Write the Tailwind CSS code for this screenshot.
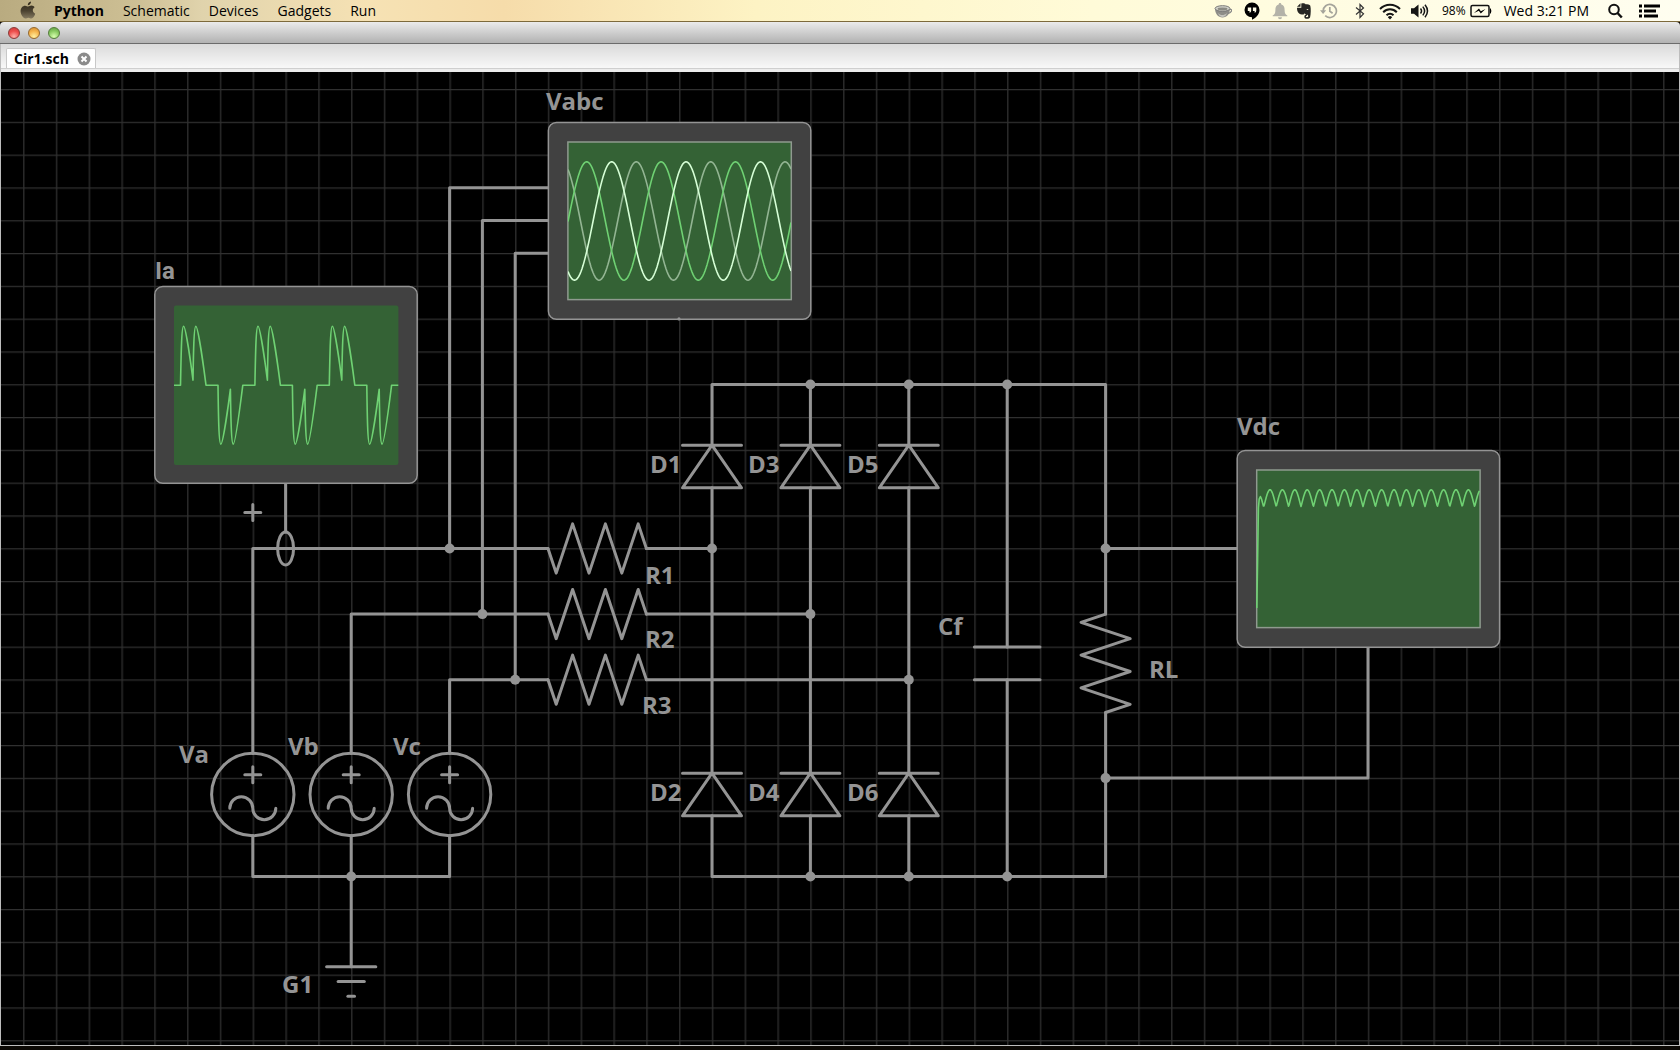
<!DOCTYPE html>
<html lang="en">
<head>
<meta charset="utf-8">
<title>Cir1.sch</title>
<script src="https://cdn.jsdelivr.net/npm/@tailwindcss/browser@4"></script>
</head>
<body class="h-screen flex flex-col overflow-hidden bg-[#0c0905] font-['Open_Sans',sans-serif] text-black">

<header class="relative z-10 flex h-[22px] shrink-0 items-center border-b border-[#7d6a3c] bg-[linear-gradient(90deg,#b9ab80_0%,#cdbf94_8%,#e0d3ac_12%,#f6e2b4_22%,#f6dcaa_30%,#fdf3c4_45%,#fffbd8_65%,#fffef0_100%)] text-sm">
  <nav class="flex items-center pl-5" aria-label="Application menu">
    <button class="flex w-[34px]" aria-label="Apple menu">
      <svg width="16" height="19" viewBox="0 0 16 19"><defs><linearGradient id="ap" x1="0" y1="0" x2="0" y2="1"><stop offset="0" stop-color="#2d2618"/><stop offset=".55" stop-color="#4b4230"/><stop offset="1" stop-color="#857a60"/></linearGradient></defs><path fill="url(#ap)" d="M11 .5c.2 1.600-1.300 3.700-3.200 3.800C7.600 2.600 9.200.8 11 .5zM8.200 5.500c.8 0 1.700-.9 3.200-.9 1.400 0 2.600.8 3.200 1.700-2.600 1.500-2.300 5.200.6 6.400-.7 2.100-2.200 4.800-3.800 4.800-1.200 0-1.600-.8-3-.8s-1.900.8-3 .8C3.300 17.500.6 13.600.6 10.300c0-3.500 2.200-5.600 4.500-5.600 1.400 0 2.300.8 3.100.8z"/></svg>
    </button>
    <button class="mr-[19px] font-bold">Python</button>
    <button class="mr-[19px]">Schematic</button>
    <button class="mr-[19px]">Devices</button>
    <button class="mr-[19px]">Gadgets</button>
    <button>Run</button>
  </nav>
  <div class="ml-auto flex items-center pr-5">
    <svg class="mr-3" width="18" height="18" viewBox="0 0 18 18"><path d="M1 6.500c0 5 3 9 7.500 9S16 11.500 16 6.500z" fill="#8d8d88"/><path d="M4 11c2 2.500 6 3 9 0-1 3-3 4-4.500 4S5 14 4 11z" fill="#c4c4bd"/><ellipse cx="8.500" cy="6.500" rx="7.500" ry="2.800" fill="#d2d2ca" stroke="#777"/><ellipse cx="8.500" cy="7" rx="5" ry="1.400" fill="#8a8a84"/><path d="M15.500 7.500c3-1 3 3-1.500 4" fill="none" stroke="#888" stroke-width="1.300"/></svg>
    <svg class="mr-3" width="16" height="18" viewBox="0 0 16 18"><path d="M8 .5a7.500 7.500 0 0 1 7.500 7.500c0 4.500-4 8.500-7.500 9.700v-2.400A7.400 7.400 0 0 1 .5 8 7.500 7.500 0 0 1 8 .5z"/><path fill="#fffce8" d="M3.800 5.500h3.400v3c0 1.200-.6 2-1.700 2.300V8.900H3.800zM8.900 5.500h3.400v3c0 1.200-.6 2-1.700 2.300V8.900H8.900z"/></svg>
    <svg class="mr-2" width="16" height="18" viewBox="0 0 16 18" fill="#b3b2a8"><path d="M8 1c1 0 1.300.7 1.300 1.600C12 3.300 12.600 5.500 12.600 8c0 3.500 1 4.500 2.700 5.500v.8H.7v-.8C2.400 12.500 3.400 11.500 3.400 8c0-2.500.6-4.700 3.300-5.400C6.700 1.700 7 1 8 1zM6 15.200h4a2 2 0 0 1-4 0z"/></svg>
    <svg class="mr-2" width="16" height="18" viewBox="0 0 16 18"><path fill="#262622" d="M1 4.800 4.500 1.200v3.600zM5.300 1.500C7 .8 9 1.200 9.500 2.200c2 .1 4.400.2 4.800 1.500.7 3 .6 8-.2 11.500-.5 1.600-2.700 1.700-4 1.500-1.500-.2-1.800-1.300-1.700-2.500.2-1.500 1.300-1.900 2.600-1.800v1.400c-1 0-1.200.3-1.100 1 .2.600 2 .6 2.300-.2.200-1-.3-1.900-1.600-2.100-1.300-.1-1.700-.5-1.800-1.500-.4 1.200-1.300 1.700-3 1.500C2.200 12 1 9.500 1 5.800h4.300z"/><path d="M10.500 7.800c.2-1 1.700-1 2 .3z" fill="#fffce8"/></svg>
    <svg class="mr-4" width="18" height="18" viewBox="0 0 18 18" fill="none" stroke="#a5a49b" stroke-width="1.700"><path d="M3.200 9a6.600 6.600 0 1 1 2 4.700"/><path d="M9.800 5v4.300l2.800 2"/><path d="M0 8.300h6.200L3.100 12z" fill="#a5a49b" stroke="none"/></svg>
    <svg class="mr-3" width="12" height="18" viewBox="0 0 12 18" fill="none" stroke="#333" stroke-width="1.200"><path d="M2 5.500l7.500 6.300L6 15.500v-13l3.500 3.500L2 12.500"/></svg>
    <svg class="mr-2" width="24" height="18" viewBox="0 0 24 18" fill="none" stroke="#151515" stroke-width="2"><path d="M2 7a14 14 0 0 1 20 0M5.200 10.200a9.500 9.500 0 0 1 13.600 0M8.500 13.300a5 5 0 0 1 7 0"/><path d="M12 17.500l-2.200-2.300a3 3 0 0 1 4.400 0z" fill="#151515" stroke="none"/></svg>
    <svg class="mr-3" width="20" height="18" viewBox="0 0 20 18"><path d="M1 6.300h3L8.500 2.500v13L4 11.700H1z" fill="#151515"/><path d="M10.500 6.500q2 2.500 0 5M12.800 4.600q3.600 4.400 0 8.800M15 2.800q5 6.200 0 12.400" fill="none" stroke="#151515" stroke-width="1.500"/></svg>
    <span class="mr-1 text-xs">98%</span>
    <svg class="mr-3" width="22" height="14" viewBox="0 0 22 14"><rect x="1" y="1.500" width="18" height="11" rx="1.500" fill="none" stroke="#111" stroke-width="1.500"/><path d="M20 4.500h.8q1.200 2.500 0 5H20z"/><path d="M4 9l5-4.500 1.800 2.700L15.500 5l-4.700 4.500-2-2.700z"/></svg>
    <time class="mr-[19px]">Wed 3:21 PM</time>
    <svg class="mr-4" width="15" height="16" viewBox="0 0 15 16" fill="none" stroke="#111" stroke-width="2"><circle cx="6" cy="6.500" r="4.800"/><path d="M9.500 10l4.300 4.500" stroke-width="2.500"/></svg>
    <svg width="21" height="14" viewBox="0 0 21 14"><path d="M0 .5h3v3H0zM0 5.500h3v3H0zM0 10.500h3v3H0zM5 .5h16v3H5zM5 5.500h12v3H5zM5 10.500h14v3H5z"/></svg>
  </div>
</header>

<div class="flex h-[22px] shrink-0 items-center gap-2 rounded-t border-b border-[#6b6b6b] bg-linear-to-b from-[#ebebeb] to-[#b2b2b2] pl-2">
  <button aria-label="Close" class="size-3 rounded-full border border-[#8a3a38] bg-[radial-gradient(circle_at_50%_85%,#ffb0a8,#ee4e4c_55%,#c63a3a)]"></button>
  <button aria-label="Minimize" class="size-3 rounded-full border border-[#95682c] bg-[radial-gradient(circle_at_50%_85%,#fff0a0,#f5b44c_55%,#d08a30)]"></button>
  <button aria-label="Zoom" class="size-3 rounded-full border border-[#557c3c] bg-[radial-gradient(circle_at_50%_85%,#d8ffb0,#8acb62_55%,#5c9a40)]"></button>
</div>

<div class="mb-1 flex min-h-0 flex-1 flex-col border-x border-b border-[#bdbdbd] bg-[#ececec]">
  <div class="flex h-[25px] shrink-0 items-end border-b border-[#cfcfcf] bg-linear-to-b from-[#dadada] to-[#f8f8f8] pl-[5px]" role="tablist">
    <div class="flex h-5 items-center gap-2 rounded-t-xs border border-b-0 border-[#c8c8c8] bg-white pl-[7px] pr-1">
      <button role="tab" aria-selected="true" class="text-sm font-bold leading-5">Cir1.sch</button>
      <button aria-label="Close tab" class="flex"><svg width="14" height="14" viewBox="0 0 14 14"><circle cx="7" cy="7" r="6.500" fill="#8b8b8b"/><path d="M4.500 4.500l5 5m0-5l-5 5" stroke="#fff" stroke-width="2"/></svg></button>
    </div>
  </div>
  <div class="h-[3px] shrink-0 bg-[#ececec]"></div>
  <main class="min-h-0 flex-1 bg-black">
    <svg id="sheet" class="block size-full" aria-label="Schematic">
      <defs>
        <pattern id="grid" x="22" y="17" width="32.800" height="32.800" patternUnits="userSpaceOnUse"><path d="M.8 0V32.800M0 .7H32.800" stroke="#303030" stroke-width="1.300"/></pattern>
        <clipPath id="clipAbc"><rect x="568" y="142" width="223" height="158"/></clipPath>
      </defs>
      <rect width="100%" height="100%" fill="url(#grid)"/>
      <g transform="translate(-1 -72)">
        <g id="wires" fill="none" stroke="#949494" stroke-width="3" stroke-linecap="round" stroke-linejoin="round"></g>
        <g id="dots" fill="#949494"></g>
        <g id="scopes"></g>
        <g id="labels" class="font-bold text-2xl" fill="#949494"></g>
      </g>
    </svg>
  </main>
</div>

<script>
const X = n => 23.2 + 32.8 * n, Y = m => 89.3 + 32.8 * m;
const NS = 'http://www.w3.org/2000/svg';
function add(parent, tag, attrs, text) {
  const e = document.createElementNS(NS, tag);
  for (const k in attrs) e.setAttribute(k, attrs[k]);
  if (text) e.textContent = text;
  document.getElementById(parent).appendChild(e);
}
const line = pts => 'M' + pts.map(p => p[0].toFixed(1) + ' ' + p[1].toFixed(1)).join('L');
const path = d => add('wires', 'path', { d });
const wire = (...p) => path(line(p.map(([n, m]) => [X(n), Y(m)])));
const plus = (x, y) => path(`M${x - 8} ${y}h16M${x} ${y - 8}v16`);

/* wires, in grid cells */
wire([7, 20.25], [7, 14], [16, 14]);
wire([10, 20.25], [10, 16], [16, 16]);
wire([13, 20.25], [13, 18], [16, 18]);
wire([16, 3], [13, 3], [13, 14]);
wire([16, 4], [14, 4], [14, 16]);
wire([16, 5], [15, 5], [15, 18]);
wire([19, 14], [21, 14]);
wire([19, 16], [24, 16]);
wire([19, 18], [27, 18]);
wire([21, 10.85], [21, 9], [33, 9], [33, 16]);
wire([21, 12.15], [21, 20.85]);
for (const n of [24, 27]) { wire([n, 9], [n, 10.85]); wire([n, 12.15], [n, 20.85]); wire([n, 22.15], [n, 24]); }
wire([21, 22.15], [21, 24], [33, 24], [33, 19]);
wire([30, 9], [30, 17]);
wire([30, 18], [30, 24]);
wire([29, 17], [31, 17]);
wire([29, 18], [31, 18]);
wire([33, 14], [37, 14]);
wire([33, 21], [41, 21], [41, 17]);
wire([7, 22.75], [7, 24], [13, 24], [13, 22.75]);
wire([10, 22.75], [10, 26.75]);
wire([9.25, 26.75], [10.75, 26.75]);
wire([9.6, 27.2], [10.4, 27.2]);
wire([9.9, 27.65], [10.1, 27.65]);
wire([8, 12], [8, 13.5]);

/* parts */
for (const m of [14, 16, 18]) wire([16, m], [16.25, m + .75], [16.75, m - .75], [17.25, m + .75], [17.75, m - .75], [18.25, m + .75], [18.75, m - .75], [19, m]);
wire([33, 16], [32.25, 16.25], [33.75, 16.75], [32.25, 17.25], [33.75, 17.75], [32.25, 18.25], [33.75, 18.75], [33, 19]);
for (const n of [21, 24, 27]) for (const m of [10.85, 20.85])
  path(`M${X(n) - 29.5} ${Y(m)}h59M${X(n)} ${Y(m)}l-29.500 42.600h59z`);
for (const n of [7, 10, 13]) {
  add('wires', 'circle', { cx: X(n), cy: Y(21.5), r: 41.2 });
  plus(X(n), Y(20.9));
  path(`M${X(n) - 23} ${Y(21.92)}a11.500 11.500 0 0 1 23 0a11.500 11.500 0 0 0 23 0`);
}
add('wires', 'ellipse', { cx: X(8), cy: Y(14), rx: 8, ry: 16.4 });
plus(X(7), Y(12.9));

for (const [n, m] of [[13,14],[14,16],[15,18],[21,14],[24,16],[27,18],[24,9],[27,9],[30,9],[24,24],[27,24],[30,24],[33,14],[33,21],[10,24]])
  add('dots', 'circle', { cx: X(n), cy: Y(m), r: 5 });

/* scopes */
function scope(n, m, framed) {
  const x = X(n) + .4, y = Y(m) + .4;
  add('scopes', 'rect', { x, y, width: 262.4, height: 196.8, rx: 8, fill: '#414141', stroke: '#949494', 'stroke-width': 1.5 });
  if (framed) add('scopes', 'rect', { x: x + 19.5, y: y + 19.5, width: 223.4, height: 157.6, fill: '#346235', stroke: '#8f9a8f', 'stroke-width': 1.5 });
  else add('scopes', 'rect', { x: x + 19.2, y: y + 19, width: 224.4, height: 159.4, rx: 2, fill: '#346235' });
}
const trace = (d, stroke, extra) => add('scopes', 'path', { d, stroke, fill: 'none', 'stroke-width': 1.6, 'stroke-linejoin': 'round', ...extra });
scope(4, 6, false);
scope(16, 1, true);
scope(37, 11, true);
add('scopes', 'circle', { cx: X(20) - .2, cy: Y(7), r: 1.6, fill: '#949494' });

let d = 'M174 385.200';
for (let k = 0; k < 3; k++) {
  const o = 74.4 * k, c = 385.2;
  const p = (x, y) => (x + o).toFixed(1) + ' ' + (c + y).toFixed(1) + ' ';
  const hump = (a, s, b, e) => 'C' + p(a + .4, s * 30) + p(a + .8, s * 59) + p(a + 2.900, s * 59) + 'C' + p(a + 5, s * 59) + p(b - 1.5, e + s * 12) + p(b, e);
  d += 'L' + p(180.5, 0) + hump(180.7, -1, 193, -5) + hump(193, -1, 206, 0)
     + 'L' + p(218, 0) + hump(218, 1, 230.4, 4) + hump(230.4, 1, 242.8, 0);
}
trace(d + 'L398.300 385.200', '#6fd173');

for (const [peak, col] of [[636.3, '#93b593'], [586.7, '#6fd173'], [611.7, '#d6ffd6']]) {
  const pts = [];
  for (let x = 568; x <= 791; x++) pts.push([x, 221 - 59.2 * Math.cos(2 * Math.PI * (x - peak) / 74.4)]);
  trace(line(pts), col, { 'clip-path': 'url(#clipAbc)' });
}

const dc = [[1256.8, 608], [1257.6, 560], [1258.4, 508], [1259.2, 499], [1260.4, 496.5], [1261.5, 499], [1263.4, 506]];
for (let x = 1264; x <= 1479.5; x += .5) {
  const u = ((x - 1263.8) / 12.4) % 1;
  dc.push([x, 506.5 - 16.7 * Math.pow(Math.abs(Math.sin(Math.PI * u)), 1.1)]);
}
trace(line(dc), '#6fd173');

for (const [x, y, t] of [[546,110,'Vabc'],[1237,435,'Vdc'],[650,473,'D1'],[748,473,'D3'],[847,473,'D5'],[650,801,'D2'],[748,801,'D4'],[847,801,'D6'],[645,584,'R1'],[645,648,'R2'],[642,714,'R3'],[938,635,'Cf'],[1149,678,'RL'],[179,763,'Va'],[288,755,'Vb'],[393,755,'Vc'],[282,993,'G1']])
  add('labels', 'text', { x, y }, t);
add('labels', 'text', { x: 155, y: 279, 'font-family': 'Roboto, sans-serif' }, 'Ia');
</script>
</body>
</html>
